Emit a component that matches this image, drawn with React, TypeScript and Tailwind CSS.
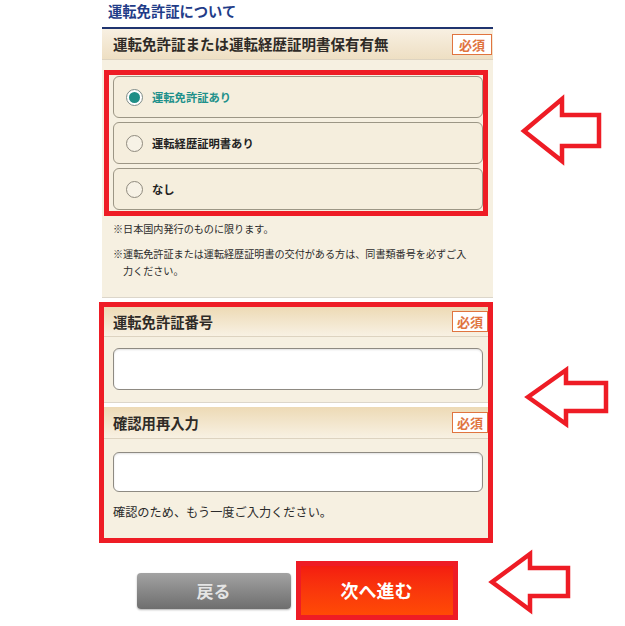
import React from 'react';

const Badge: React.FC<{ className?: string }> = ({ className = '' }) => (
  <span
    className={`flex h-[21px] items-center justify-center border border-[#e0743f] bg-white text-[13px] font-bold leading-none text-[#e0743f] ${className}`}
  >
    必須
  </span>
);

const FieldHeader: React.FC<{ label: string; h: string; badge?: string }> = ({ label, h, badge = 'w-[40px]' }) => (
  <div
    className={`flex ${h} items-center justify-between border-b border-[#ddd3c0] bg-gradient-to-b from-[#eddab5] to-[#f8f1e3] pl-[9px]`}
  >
    <span className="text-[14.3px] font-bold text-[#2e2a26]">{label}</span>
    <Badge className={badge} />
  </div>
);

const Option: React.FC<{ label: string; checked?: boolean }> = ({ label, checked }) => (
  <div className="flex h-[42px] items-center rounded-[6px] border border-[#9c9685] bg-[#f5eedd] pl-[12px]">
    <span
      className={`flex h-[17px] w-[17px] items-center justify-center rounded-full border ${
        checked ? 'border-[#7f8c88] bg-white' : 'border-[#8f8a7e] bg-[#f7f2e6]'
      }`}
    >
      {checked && <span className="h-[11px] w-[11px] rounded-full bg-[#1f8e86]" />}
    </span>
    <span className={`ml-[9px] text-[11.3px] font-bold ${checked ? 'text-[#20908a]' : 'text-[#222]'}`}>{label}</span>
  </div>
);

const Arrow: React.FC<{ points: string }> = ({ points }) => (
  <polygon points={points} fill="none" stroke="#ee1c25" strokeWidth="4.5" strokeLinejoin="miter" />
);

export default function App() {
  return (
    <div className="relative h-[626px] w-[625px] overflow-hidden bg-white font-['Noto_Sans_CJK_JP',sans-serif]">
      <div className="ml-[102px] w-[391px]">
        {/* title */}
        <div className="h-[29px] border-b-[2px] border-[#1f346f] pl-[6px] pt-[1px] text-[14.3px] font-bold leading-[20px] text-[#1f3c88]">
          運転免許証について
        </div>

        {/* 保有有無 */}
        <div className="flex h-[31px] items-center justify-between border-b border-[#ddd3c0] bg-gradient-to-b from-[#f8f0e2] to-[#eedfc3] pl-[11px] pr-[1px]">
          <span className="text-[14.5px] font-bold text-[#2e2a26]">運転免許証または運転経歴証明書保有有無</span>
          <Badge className="w-[40px]" />
        </div>
        <div className="border-b border-[#dcd6ca] bg-[#f6f0e1] pb-[18px] pt-[10px]">
          <div className="ml-[2px] w-[384px] border-[5px] border-[#ee1c25] pb-[1px] pl-[4px] pt-[1px]">
            <div className="flex flex-col gap-[4px]">
              <Option label="運転免許証あり" checked />
              <Option label="運転経歴証明書あり" />
              <Option label="なし" />
            </div>
          </div>
          <div className="mt-[4px] pl-[11px] text-[10.1px] leading-[17px] text-[#2b2b2b]">
            <p>※日本国内発行のものに限ります。</p>
            <p className="mt-[8px] whitespace-nowrap">
              ※運転免許証または運転経歴証明書の交付がある方は、同書類番号を必ずご入
              <br />
              <span className="pl-[10px]">力ください。</span>
            </p>
          </div>
        </div>

        {/* 番号 */}
        <div className="-ml-[3px] mt-[4px] w-[394px] border-[5px] border-[#ee1c25]">
          <FieldHeader label="運転免許証番号" h="h-[30px]" badge="w-[36px]" />
          <div className="bg-[#f6f0e1] pb-[12px] pl-[9px] pt-[11px]">
            <div className="h-[42px] w-[370px] rounded-[6px] border border-[#8e8a82] bg-white shadow-[inset_0_1px_2px_rgba(0,0,0,0.12)]" />
          </div>
          <div className="h-[5px] border-t border-[#dcd6ca] bg-white" />
          <FieldHeader label="確認用再入力" h="h-[32px]" badge="w-[36px]" />
          <div className="bg-[#f6f0e1] pb-[18px] pl-[9px] pt-[13px]">
            <div className="h-[40px] w-[370px] rounded-[6px] border border-[#8e8a82] bg-white shadow-[inset_0_1px_2px_rgba(0,0,0,0.12)]" />
            <p className="mt-[12px] text-[12.2px] leading-[16px] text-[#2b2b2b]">確認のため、もう一度ご入力ください。</p>
          </div>
        </div>

        {/* buttons */}
        <div className="mt-[18px] flex items-center justify-center gap-[5px] pr-[1px]">
          <button className="flex h-[36px] w-[154px] items-center justify-center rounded-[4px] bg-gradient-to-b from-[#a3a3a3] to-[#6e6e6e] text-[17px] font-bold text-[#e4e4e4] shadow-[0_1px_2px_rgba(0,0,0,0.3)]">
            戻る
          </button>
          <div className="border-[5px] border-[#ee1c25]">
            <button className="flex h-[49px] w-[152px] items-center justify-center bg-gradient-to-b from-[#f41c10] to-[#ff4a05] text-[18px] font-bold text-white">
              次へ進む
            </button>
          </div>
        </div>
      </div>

      {/* annotation arrows */}
      <svg className="pointer-events-none absolute left-0 top-0" width="625" height="626" viewBox="0 0 625 626">
        <Arrow points="524,131 562,99 562,115 599,115 599,146 562,146 562,161" />
        <Arrow points="528,397 566,370 566,383 606,383 606,411 566,411 566,424" />
        <Arrow points="492,582 530,554 530,568 568,568 568,596 530,596 530,610" />
      </svg>
    </div>
  );
}
